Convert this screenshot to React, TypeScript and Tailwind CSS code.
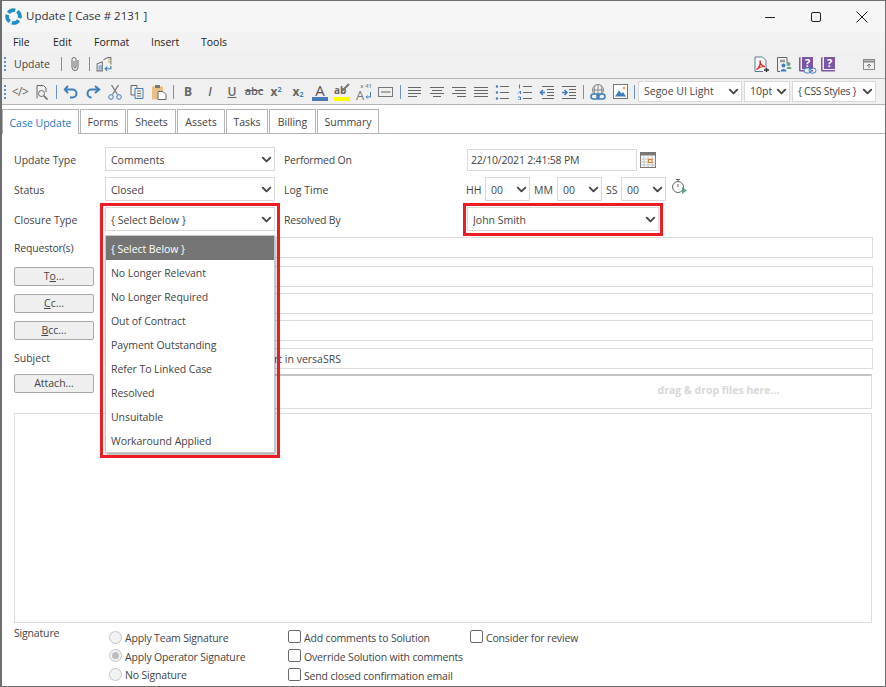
import { ReactNode } from "react";
import { ChevronDown } from "lucide-react";

const FONT = "font-['Open_Sans','Noto_Sans',sans-serif]";

function Select({ value, className = "", tall }: { value: string; className?: string; tall?: boolean }) {
  return (
    <div className={`flex items-center justify-between bg-white border border-[#d9d9d9] pl-[5px] ${className}`}>
      <span className={`truncate ${tall ? "pt-[4px]" : "pt-[1px]"}`}>{value}</span>
      <ChevronDown size={15} strokeWidth={3} className="shrink-0 text-[#444]" />
    </div>
  );
}

function Input({ value = "" }: { value?: string }) {
  return (
    <div className="flex-1 h-[21px] bg-white border border-[#dcdcdc] pl-[5px] leading-[20px] whitespace-nowrap overflow-hidden">
      {value}
    </div>
  );
}

function Btn({ children, className = "" }: { children: ReactNode; className?: string }) {
  return (
    <div className={`w-[80px] h-[19px] shrink-0 flex items-center justify-center rounded-[2px] bg-[#efefef] border border-[#a8a8a8] ${className}`}>
      {children}
    </div>
  );
}

function Row({ label, children, className = "" }: { label?: ReactNode; children: ReactNode; className?: string }) {
  return (
    <div className={`flex items-start ${className}`}>
      <div className="w-[91px] shrink-0 leading-[21px]">{label}</div>
      {children}
    </div>
  );
}

function Grip() {
  return <div className="w-[2px] h-[14px] border-l-2 border-dotted border-[#5b8fc7] shrink-0" />;
}

function Sep() {
  return <div className="w-[1px] h-[14px] mx-[3px] bg-[#6a94c4] shrink-0" />;
}

function Cell({ children, className = "" }: { children: ReactNode; className?: string }) {
  return <div className={`w-[22px] h-[18px] shrink-0 flex items-center justify-center ${className}`}>{children}</div>;
}

function Svg({ children, w = 16, h = 16 }: { children: ReactNode; w?: number; h?: number }) {
  return (
    <svg width={w} height={h} viewBox="0 0 16 16" fill="none" stroke="#666" strokeWidth="1">
      {children}
    </svg>
  );
}

function Lines({ rows }: { rows: [number, number][] }) {
  return (
    <Svg>
      {rows.map(([a, b], i) => (
        <path key={i} d={`M${a} ${3.5 + i * 3}H${b}`} />
      ))}
    </Svg>
  );
}

function Logo() {
  return (
    <svg width="17" height="17" viewBox="0 0 16 16" fill="none" stroke="#1f8fc9" strokeWidth="3.4">
      <path d="M3.2 4.6A6 6 0 0 1 9.6 2.2" />
      <path d="M11.6 3.2A6 6 0 0 1 13.8 9.6" />
      <path d="M12.8 11.6A6 6 0 0 1 6.4 13.8" />
      <path d="M4.4 12.8A6 6 0 0 1 2.2 6.4" />
    </svg>
  );
}

function HelpBook({ linked, className = "" }: { linked?: boolean; className?: string }) {
  return (
    <div className={`relative w-[16px] h-[16px] ${className}`}>
      <svg width="16" height="16" viewBox="0 0 16 16" className="absolute inset-0">
        <path d="M1 2.5C1 1.5 1.5 1 2.5 1V14H15V15.5H2.5C1.5 15.5 1 15 1 14Z" fill="#7d55a5" />
        <rect x="4" y="1" width="11" height="12" fill="#7d55a5" />
      </svg>
      <span className="absolute left-[4px] top-[1px] w-[11px] text-center text-white font-bold text-[11px] leading-[12px]">?</span>
      {linked && (
        <svg width="14" height="7" viewBox="0 0 14 7" fill="none" className="absolute right-[-3px] bottom-[-2px]">
          <rect x="1" y="1" width="7" height="5" rx="2.5" fill="#f0f0f0" stroke="#3f7dbd" />
          <rect x="6" y="1" width="7" height="5" rx="2.5" stroke="#3f7dbd" />
        </svg>
      )}
    </div>
  );
}

function Radio({ checked }: { checked?: boolean }) {
  return (
    <div className="w-[13px] h-[13px] rounded-full border border-[#c4c4c4] bg-[#f2f2f2] flex items-center justify-center shrink-0">
      {checked && <div className="w-[7px] h-[7px] rounded-full bg-[#bdbdbd]" />}
    </div>
  );
}

function Check({ label }: { label: string }) {
  return (
    <div className="flex items-start gap-[3px] h-[19px]">
      <div className="w-[13px] h-[13px] rounded-[2px] border border-[#6a6a6a] bg-white shrink-0" />
      <span className="leading-[17px] whitespace-nowrap">{label}</span>
    </div>
  );
}

const OPTIONS = [
  "No Longer Relevant",
  "No Longer Required",
  "Out of Contract",
  "Payment Outstanding",
  "Refer To Linked Case",
  "Resolved",
  "Unsuitable",
  "Workaround Applied",
];

const TABS = [
  ["Forms", "w-[46px]"],
  ["Sheets", "w-[49px]"],
  ["Assets", "w-[48px]"],
  ["Tasks", "w-[42px]"],
  ["Billing", "w-[47px]"],
  ["Summary", "w-[62px]"],
];

export default function App() {
  return (
    <div className={`${FONT} relative w-[886px] h-[687px] overflow-hidden flex flex-col bg-white text-[10.5px] text-[#444] border-t border-r border-b border-l-2 border-[#6e6e6e]`}>
      {/* title bar */}
      <div className="h-[31px] shrink-0 flex items-center bg-[#f6f6f6] pl-[3px]">
        <Logo />
        <span className="ml-[4px] -mt-[1px] text-[11.5px] text-[#333]">Update [ Case # 2131 ]</span>
        <div className="ml-auto flex items-center text-[#222]">
          <svg width="12" height="12" viewBox="0 0 12 12" stroke="#222" fill="none" className="mr-[34px]"><path d="M1 6.5H11" /></svg>
          <svg width="12" height="12" viewBox="0 0 12 12" stroke="#222" fill="none" className="mr-[34px]"><rect x="1.5" y="1.5" width="9" height="9" rx="1.5" /></svg>
          <svg width="12" height="12" viewBox="0 0 12 12" stroke="#222" fill="none" className="mr-[17px]"><path d="M.5.5L11.5 11.5M11.5.5L.5 11.5" /></svg>
        </div>
      </div>

      {/* menu */}
      <div className="h-[18px] shrink-0 flex items-center bg-[#f2f2f2] pl-[11px] pt-[3px] text-[#222]">
        <span className="w-[40px]">File</span>
        <span className="w-[41px]">Edit</span>
        <span className="w-[57px]">Format</span>
        <span className="w-[50px]">Insert</span>
        <span>Tools</span>
      </div>

      {/* update toolbar */}
      <div className="h-[29px] shrink-0 flex items-center bg-[#f0f0f0] pl-[2px] border-b border-[#b4b4b4]">
        <Grip />
        <span className="ml-[8px] pt-[2px] text-[#444]">Update</span>
        <div className="w-[1px] h-[14px] bg-[#6a94c4] ml-[11px]" />
        <Cell className="w-[27px]">
          <svg width="12" height="16" viewBox="0 0 12 16" fill="none" stroke="#666"><path d="M9 4V11.5A3 3 0 0 1 3 11.5V3.5A2 2 0 0 1 7 3.5V11A1 1 0 0 1 5 11V5" /></svg>
        </Cell>
        <div className="w-[1px] h-[14px] bg-[#6a94c4]" />
        <div className="ml-[6px]">
          <svg width="17" height="17" viewBox="0 0 16 16" fill="none" stroke="#777">
            <path d="M1 7.5L6 5.5V14H1Z" fill="#e8eef5" />
            <path d="M7 3.5L11 1.5H14V8" />
            <path d="M3 9V13M4.8 8.5V13" stroke="#5b8fc7" />
            <path d="M14 9.5V12H8.5M10.5 10L8.5 12L10.5 14" stroke="#3f7dbd" />
            <path d="M11.5 3.5H13M11.5 5.5H13" stroke="#e0a030" />
          </svg>
        </div>
        <div className="ml-auto flex items-center pr-[10px]">
          <svg width="16" height="17" viewBox="0 0 16 17" fill="none" className="mr-[7px]">
            <path d="M2 1H9.5L13 4.5V13M10 15.5H2V1" fill="#fff" stroke="#5c7694" />
            <path d="M3.5 13.5C6 12 8 8 7 4.5C7 7.5 9 10 12 10.5C9 10 6 11 3.5 13.5Z" stroke="#d6262c" strokeWidth="1.3" />
            <path d="M11 14H16M13.5 12V16" stroke="#333" strokeWidth="1.4" />
          </svg>
          <svg width="16" height="17" viewBox="0 0 16 17" fill="none" className="mr-[6px]">
            <path d="M11 7V1.5H1.5V15.5H4" stroke="#666" />
            <path d="M4 5H9" stroke="#999" strokeWidth="2.4" />
            <circle cx="7.5" cy="9.5" r="2" fill="#3f7dbd" />
            <path d="M4.5 15.5C4.5 12 10.5 12 10.5 15.5Z" fill="#3f7dbd" />
            <circle cx="12.5" cy="8" r="2" fill="#5fa58a" />
            <path d="M10.5 13C10.5 10 15.5 10 15.5 13Z" fill="#5fa58a" />
          </svg>
          <HelpBook linked className="mr-[6px]" />
          <HelpBook className="mr-[27px]" />
          <svg width="12" height="11" viewBox="0 0 12 11" fill="none">
            <rect x=".5" y=".5" width="11" height="10" stroke="#888" />
            <path d="M1 2.5H11" stroke="#888" strokeWidth="2" />
            <path d="M6 9V5M4 7L6 5L8 7" stroke="#777" />
          </svg>
        </div>
      </div>

      {/* format toolbar */}
      <div className="h-[26px] shrink-0 flex items-center bg-[#f0f0f0] pl-[2px] border-b border-[#b4b4b4]">
        <Grip />
        <div className="w-[3px]" />
        <Cell><span className="text-[12px] text-[#666] tracking-[-0.5px]">&lt;/&gt;</span></Cell>
        <Cell>
          <Svg><path d="M3 14.5V1.5H9.5L12 4V8" /><circle cx="7.5" cy="9.5" r="3" /><path d="M10 12L13.5 15.5" strokeWidth="1.6" /></Svg>
        </Cell>
        <Sep />
        <Cell>
          <svg width="16" height="16" viewBox="0 0 16 16" fill="none" stroke="#3f7dbd" strokeWidth="2"><path d="M5 2L1.8 5.5L5 9" /><path d="M2 5.5H9.5A4 4 0 0 1 9.5 13.5H7" /></svg>
        </Cell>
        <Cell>
          <svg width="16" height="16" viewBox="0 0 16 16" fill="none" stroke="#3f7dbd" strokeWidth="2"><path d="M10 2L14.2 5.5L10 9" /><path d="M14 5.5H6.5A4 4 0 0 0 6.5 13.5H5" /></svg>
        </Cell>
        <Cell>
          <svg width="16" height="16" viewBox="0 0 16 16" fill="none" stroke="#777"><path d="M4.5 1L10.5 10.5M11.5 1L5.5 10.5" strokeWidth="1.3" /><circle cx="4" cy="13" r="2.3" stroke="#3f7dbd" /><circle cx="12" cy="13" r="2.3" stroke="#3f7dbd" /></svg>
        </Cell>
        <Cell>
          <Svg><path d="M2 1.5H8V11H2Z" /><path d="M6 4.5H14V14.5H6Z" fill="#f0f0f0" stroke="#3f7dbd" /><path d="M8 7H12M8 9.5H12M8 12H12" stroke="#777" /></Svg>
        </Cell>
        <Cell>
          <svg width="16" height="16" viewBox="0 0 16 16" fill="none">
            <rect x="1" y="2.5" width="11" height="13" fill="#e8bf85" />
            <rect x="4" y="1" width="5" height="3" fill="#777" />
            <path d="M7 7.5H12L15 10.5V15.5H7Z" fill="#fff" stroke="#666" />
          </svg>
        </Cell>
        <Sep />
        <Cell><span className="font-bold text-[12px] text-[#666]">B</span></Cell>
        <Cell><span className="italic font-semibold text-[12px] text-[#666]">I</span></Cell>
        <Cell><span className="underline font-semibold text-[12px] text-[#666]">U</span></Cell>
        <Cell><span className="line-through font-semibold text-[11px] text-[#666]">abc</span></Cell>
        <Cell><span className="font-bold text-[12px] text-[#666]">x<sup className="text-[7px] text-[#3f7dbd]">2</sup></span></Cell>
        <Cell><span className="font-bold text-[12px] text-[#666]">x<sub className="text-[7px] text-[#3f7dbd]">2</sub></span></Cell>
        <Cell>
          <div className="flex flex-col items-center w-[16px]">
            <span className="text-[15px] leading-[14px] text-[#555]">A</span>
            <div className="w-[16px] h-[4px] bg-[#4a7ab5]" />
          </div>
        </Cell>
        <Cell>
          <div className="relative flex flex-col items-center w-[16px]">
            <span className="text-[10px] leading-[14px] font-bold text-[#666] self-start">ab</span>
            <svg width="9" height="9" viewBox="0 0 9 9" className="absolute right-0 top-0" stroke="#777" strokeWidth="2"><path d="M1 8L8 1" /></svg>
            <div className="w-[16px] h-[4px] bg-[#ffff00]" />
          </div>
        </Cell>
        <Cell>
          <div className="relative w-[16px] h-[18px]">
            <span className="absolute left-0 bottom-0 text-[13px] leading-[11px] text-[#777]">A</span>
            <span className="absolute right-0 top-0 text-[6px] leading-[6px] text-[#888] font-semibold whitespace-nowrap">x 41</span>
            <svg width="7" height="8" viewBox="0 0 7 8" fill="none" stroke="#3f7dbd" className="absolute right-0 bottom-[1px]"><path d="M5.5 0V5H1M2.5 3.5L1 5L2.5 6.5" /></svg>
          </div>
        </Cell>
        <Cell>
          <svg width="16" height="12" viewBox="0 0 16 12" fill="none"><rect x=".5" y="1.5" width="14" height="9" stroke="#777" /><path d="M3 6H12.5" stroke="#aaa" strokeWidth="2" /></svg>
        </Cell>
        <Sep />
        <Cell><Lines rows={[[1, 14], [1, 14], [1, 14], [1, 10]]} /></Cell>
        <Cell><Lines rows={[[1, 15], [3, 13], [1, 15], [4, 12]]} /></Cell>
        <Cell><Lines rows={[[1, 15], [4, 15], [1, 15], [6, 15]]} /></Cell>
        <Cell><Lines rows={[[1, 15], [1, 15], [1, 15], [1, 15]]} /></Cell>
        <Cell>
          <Svg>
            <path d="M5 2.5H14M5 8.5H14M5 14.5H14" />
            <circle cx="2" cy="2.5" r="1.2" fill="#3f7dbd" stroke="none" />
            <circle cx="2" cy="8.5" r="1.2" fill="#3f7dbd" stroke="none" />
            <circle cx="2" cy="14.5" r="1.2" fill="#3f7dbd" stroke="none" />
          </Svg>
        </Cell>
        <Cell>
          <Svg>
            <path d="M6 2.5H15M6 8.5H15M6 14.5H15" />
            <path d="M2.5 .5V4.5M1 9.5L3.5 7V10M1 13H3.5V16H1" stroke="#3f7dbd" />
          </Svg>
        </Cell>
        <Cell>
          <Svg>
            <path d="M3 2.5H15M8 5.5H15M8 8.5H15M8 11.5H15M3 14.5H15" />
            <path d="M6 8.5H1.5M4 6L1.5 8.5L4 11" stroke="#3f7dbd" strokeWidth="1.6" />
          </Svg>
        </Cell>
        <Cell>
          <Svg>
            <path d="M1 2.5H15M8 5.5H15M8 8.5H15M8 11.5H15M1 14.5H15" />
            <path d="M1 8.5H6M3.5 6L6 8.5L3.5 11" stroke="#3f7dbd" strokeWidth="1.6" />
          </Svg>
        </Cell>
        <Sep />
        <Cell>
          <svg width="16" height="16" viewBox="0 0 16 16" fill="none">
            <circle cx="8" cy="6" r="5.5" stroke="#888" />
            <path d="M2.5 6H13.5M8 .5V11M5 1.5C4 4 4 8 5 10.5M11 1.5C12 4 12 8 11 10.5" stroke="#888" />
            <rect x="1" y="10" width="8" height="5" rx="2.5" stroke="#3f7dbd" strokeWidth="1.6" fill="#f0f0f0" />
            <rect x="7" y="10" width="8" height="5" rx="2.5" stroke="#3f7dbd" strokeWidth="1.6" />
          </svg>
        </Cell>
        <Cell>
          <svg width="15" height="15" viewBox="0 0 15 15" fill="none">
            <rect x=".5" y=".5" width="14" height="14" stroke="#777" fill="#fff" />
            <path d="M2 12.5L6 6.5L8.5 9.5L10 8L13 12.5Z" fill="#3f7dbd" />
            <circle cx="11" cy="4" r="1.3" fill="#eda44a" />
          </svg>
        </Cell>
        <Sep />
        <Select value="Segoe UI Light" className="w-[104px] h-[21px]" />
        <Select value="10pt" className="w-[46px] h-[21px] ml-[2px]" />
        <Select value="{ CSS Styles }" className="w-[84px] h-[21px] ml-[2px] tracking-[-0.3px]" />
      </div>

      {/* tabs */}
      <div className="h-[29px] shrink-0 flex items-end gap-[1px] border-b border-[#b4b4b4]">
        <div className="w-[77px] h-[25px] -mb-[1px] pt-[3px] flex items-center justify-center bg-white border border-b-0 border-[#b4b4b4] text-[#1a78c2]">
          Case Update
        </div>
        {TABS.map(([name, w]) => (
          <div key={name} className={`${w} h-[24px] pt-[3px] flex items-center justify-center border border-b-0 border-[#b4b4b4]`}>
            {name}
          </div>
        ))}
      </div>

      {/* form */}
      <div className="flex-1 flex flex-col pt-[13px] pl-[12px] pr-[12px]">
        <div className="flex flex-col gap-[6px]">
          <div className="flex items-center h-[24px]">
            <span className="w-[91px] pt-[3px]">Update Type</span>
            <Select tall value="Comments" className="w-[170px] h-[24px]" />
            <span className="ml-[9px] w-[183px] pt-[3px] tracking-[-0.2px]">Performed On</span>
            <div className="w-[170px] h-[22px] mt-[2px] bg-white border border-[#d9d9d9] pl-[3px] leading-[21px] tracking-[-0.2px]">22/10/2021 2:41:58 PM</div>
            <svg width="16" height="16" viewBox="0 0 16 16" fill="none" className="ml-[3px] mt-[2px]">
              <rect x=".5" y=".5" width="15" height="15" stroke="#777" fill="#fff" />
              <rect x=".5" y=".5" width="15" height="3" fill="#777" />
              <path d="M.5 7H15.5M.5 10H15.5M.5 13H15.5M4 4V15M8 4V15M12 4V15" stroke="#c4c4c4" />
              <rect x="8.5" y="7.5" width="3.5" height="3" fill="#fff" stroke="#e07b20" />
            </svg>
          </div>
          <div className="flex items-center h-[24px]">
            <span className="w-[91px] pt-[3px]">Status</span>
            <Select tall value="Closed" className="w-[170px] h-[24px]" />
            <span className="ml-[9px] w-[182px] pt-[3px]">Log Time</span>
            <span className="w-[19px] pt-[3px]">HH</span>
            <Select tall value="00" className="w-[45px] h-[24px]" />
            <span className="w-[27px] pl-[4px] pt-[3px]">MM</span>
            <Select tall value="00" className="w-[45px] h-[24px]" />
            <span className="w-[19px] pl-[4px] pt-[3px]">SS</span>
            <Select tall value="00" className="w-[45px] h-[24px]" />
            <svg width="16" height="18" viewBox="0 0 16 18" fill="none" stroke="#666" className="ml-[5px] -mt-[6px]">
              <circle cx="7" cy="10" r="5.5" />
              <path d="M5 2.5H9M7 2.5V4.5M7 7V10" />
              <path d="M11 10L16 13.5L11 17Z" fill="#5fa58a" stroke="none" />
            </svg>
          </div>
          <div className="flex items-center h-[24px]">
            <span className="w-[91px] pt-[3px]">Closure Type</span>
            <Select tall value="{ Select Below }" className="w-[170px] h-[24px]" />
            <span className="ml-[9px] w-[183px] pt-[3px] tracking-[-0.2px]">Resolved By</span>
            <Select tall value="John Smith" className="w-[192px] h-[24px]" />
          </div>
          <Row label={<span className="block pt-[1px] tracking-[-0.2px]">Requestor(s)</span>}><Input /></Row>
          <Row label={<Btn className="mt-[1px]">T<u>o</u>...</Btn>} className="mt-[1px]"><Input /></Row>
          <Row label={<Btn className="mt-[1px]"><u>C</u>c...</Btn>}><Input /></Row>
          <Row label={<Btn className="mt-[1px]"><u>B</u>cc...</Btn>}><Input /></Row>
          <Row label="Subject" className="mt-[1px]"><Input value="Unable to generate monthly report in versaSRS" /></Row>
        </div>
        <Row label={<Btn>Attach...</Btn>} className="mt-[5px] h-[35px]">
          <div className="flex-1 h-[35px] mr-[1px] flex items-center justify-center pl-[460px] pb-[2px] bg-white border border-[#dcdcdc] border-t-[#c4c4c4] border-t-2 font-bold text-[#d8d8d8]">
            drag &amp; drop files here...
          </div>
        </Row>
        <div className="h-[210px] mt-[4px] mr-[1px] border border-[#dcdcdc] bg-white" />
        <div className="flex mt-[6px] tracking-[-0.17px]">
          <span className="w-[91px] -mt-[2px] leading-[12px]">Signature</span>
          <div className="w-[183px] flex flex-col pl-[4px] -mt-[1px]">
            <div className="flex items-center gap-[3px] h-[18.5px]"><Radio /><span className="mt-[4px]">Apply Team Signature</span></div>
            <div className="flex items-center gap-[3px] h-[18.5px]"><Radio checked /><span className="mt-[4px]">Apply Operator Signature</span></div>
            <div className="flex items-center gap-[3px] h-[18.5px]"><Radio /><span className="mt-[4px]">No Signature</span></div>
          </div>
          <div className="w-[182px] flex flex-col mt-[1px]">
            <Check label="Add comments to Solution" />
            <Check label="Override Solution with comments" />
            <Check label="Send closed confirmation email" />
          </div>
          <div className="mt-[1px]"><Check label="Consider for review" /></div>
        </div>
      </div>

      {/* open closure type list */}
      <div className="absolute left-[103px] top-[234px] w-[170px] bg-white border border-[#c8c8c8] tracking-[-0.06px] shadow-[1px_2px_3px_rgba(0,0,0,0.35)]">
        <div className="h-[24px] flex items-center pl-[5px] pt-[4px] bg-[#757575] text-white">{"{ Select Below }"}</div>
        {OPTIONS.map((o) => (
          <div key={o} className="h-[24px] flex items-center pl-[5px] pt-[4px]">{o}</div>
        ))}
      </div>

      {/* red highlight boxes */}
      <div className="absolute left-[98px] top-[202px] w-[180px] h-[255px] border-[3px] border-[#ed1c24] pointer-events-none" />
      <div className="absolute left-[461px] top-[202px] w-[200px] h-[33px] border-[3px] border-[#ed1c24] pointer-events-none" />
    </div>
  );
}
